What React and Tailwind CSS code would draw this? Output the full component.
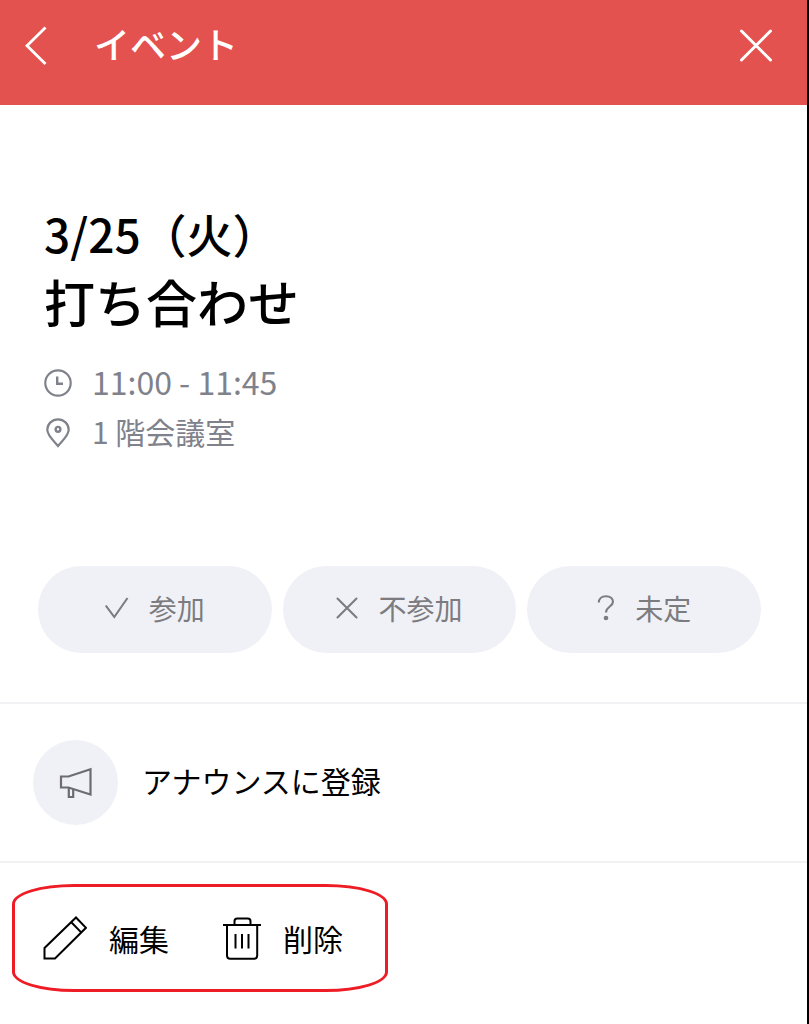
import { useState } from "react";

const responses = [
  { id: "yes", label: "参加", Icon: CheckIcon },
  { id: "no", label: "不参加", Icon: CrossIcon },
  { id: "maybe", label: "未定", Icon: QuestionIcon },
];

function BackIcon() {
  return (
    <svg width="24" height="40" viewBox="0 0 24 40" fill="none" stroke="currentColor" strokeWidth="2.8">
      <path d="M21.5 1.5 L3 19.8 L21.5 38" />
    </svg>
  );
}

function CloseIcon() {
  return (
    <svg width="34" height="34" viewBox="0 0 34 34" fill="none" stroke="currentColor" strokeWidth="3" strokeLinecap="round">
      <path d="M2.5 3 L31.5 32 M31.5 3 L2.5 32" />
    </svg>
  );
}

function ClockIcon() {
  return (
    <svg width="28" height="28" viewBox="0 0 28 28" fill="none" stroke="currentColor" strokeWidth="2.2">
      <circle cx="14" cy="14" r="12.7" />
      <path d="M13.2 7.5 V14.8 H19" strokeWidth="2.4" />
    </svg>
  );
}

function PinIcon() {
  return (
    <svg width="28" height="30" viewBox="0 0 28 30" fill="none" stroke="currentColor" strokeWidth="2.2">
      <path d="M14 28 C11 24 3.3 17.8 3.3 11.8 A10.7 10.5 0 0 1 24.7 11.8 C24.7 17.8 17 24 14 28 Z" />
      <circle cx="14" cy="11.3" r="2.4" strokeWidth="2.4" />
    </svg>
  );
}

function CheckIcon() {
  return (
    <svg width="24" height="24" viewBox="0 0 24 24" fill="none" stroke="currentColor" strokeWidth="2.1">
      <path d="M0.8 9.5 L9.3 21 L22.5 2" />
    </svg>
  );
}

function CrossIcon() {
  return (
    <svg width="22" height="22" viewBox="0 0 22 22" fill="none" stroke="currentColor" strokeWidth="2.1" strokeLinecap="round">
      <path d="M1.5 1.5 L20.5 20.5 M20.5 1.5 L1.5 20.5" />
    </svg>
  );
}

function QuestionIcon() {
  return (
    <svg width="18" height="26" viewBox="0 0 18 26" fill="none" stroke="currentColor" strokeWidth="2.1">
      <path d="M1.8 7.6 C1.8 3.8 4.6 1.3 9 1.3 C13.2 1.3 16 3.4 16 6.8 C16 11.6 9 11.6 9 17.6" />
      <circle cx="9" cy="23" r="2.3" fill="currentColor" stroke="none" />
    </svg>
  );
}

function MegaphoneIcon() {
  return (
    <svg width="34" height="32" viewBox="0 0 34 32" fill="none" stroke="currentColor" strokeWidth="2.2">
      <path d="M2 9.5 H9.5 L31.5 2.3 V27.5 L9.5 20.5 H2 Z" />
      <path d="M9.8 20.5 V30 H14.2 V22" />
    </svg>
  );
}

function PencilIcon() {
  return (
    <svg width="44" height="44" viewBox="0 0 44 44" fill="none" stroke="currentColor" strokeWidth="2">
      <path d="M1.5 42.5 V32 L33 1.5 L43 11.8 L12 42.5 Z M28.3 6.3 L38.2 16.4" />
    </svg>
  );
}

function TrashIcon() {
  return (
    <svg width="38" height="43" viewBox="0 0 38 43" fill="none" stroke="currentColor" strokeWidth="2">
      <path d="M0 8 H38" />
      <path d="M4 8 V38.5 Q4 41.7 7.2 41.7 H31 Q34.2 41.7 34.2 38.5 V8" />
      <path d="M11.5 8 V4.2 Q11.5 1.5 14.2 1.5 H24.8 Q27.5 1.5 27.5 4.2 V8" />
      <path d="M12.5 17 V31.5 M19 17 V31.5 M25.5 17 V31.5" />
    </svg>
  );
}

export default function App() {
  const [answer, setAnswer] = useState(null);

  return (
    <div className="flex min-h-screen flex-col border-r-2 border-black bg-white font-['Noto_Sans_CJK_JP',sans-serif] text-black">
      <header className="flex h-[105px] items-start justify-between bg-[#e3524f] pt-6 pr-[34px] pl-6 text-white">
        <div className="flex items-center gap-[46px]">
          <button type="button" aria-label="戻る" className="mt-0.5">
            <BackIcon />
          </button>
          <h1 className="pb-1 text-[36px] leading-9 font-medium">イベント</h1>
        </div>
        <button type="button" aria-label="閉じる" className="mt-1">
          <CloseIcon />
        </button>
      </header>

      <main>
        <section className="px-11 pt-[95px]">
          <h2 className="font-medium">
            <span className="block text-[46px] leading-[66px]">3/25（火）</span>
            <span className="block text-[51px] leading-[70px]">打ち合わせ</span>
          </h2>
          <div className="mt-[22px] text-[#7f828b]">
            <p className="flex h-[50px] items-center gap-5">
              <ClockIcon />
              <span className="pb-1 text-[32px] leading-10">11:00 - 11:45</span>
            </p>
            <p className="flex h-[50px] items-center gap-5">
              <PinIcon />
              <span className="pb-1 text-[30px] leading-10">1 階会議室</span>
            </p>
          </div>
        </section>

        <section className="mt-[108px] grid grid-cols-3 gap-[11px] pr-[46px] pl-[38px]">
          {responses.map(({ id, label, Icon }) => (
            <button
              key={id}
              type="button"
              aria-pressed={answer === id}
              onClick={() => setAnswer(id)}
              className="flex h-[87px] items-center justify-center gap-5 rounded-full bg-[#f0f1f6] pb-1 text-[28px] text-[#7c7c80]"
            >
              <Icon />
              <span>{label}</span>
            </button>
          ))}
        </section>

        <section className="mt-[49px] border-y-2 border-[#f1f1f3] px-[33px] py-9">
          <button type="button" className="flex items-center gap-6 text-[30px]">
            <span className="flex size-[85px] items-center justify-center rounded-full bg-[#f0f1f6] text-[#6d6c74]">
              <MegaphoneIcon />
            </span>
            <span className="pb-1">アナウンスに登録</span>
          </button>
        </section>

        <section className="px-3 pt-[21px] pb-8">
          <div className="flex h-[108px] w-fit items-center gap-[54px] rounded-[62px/20px] border-3 border-[#ee1c25] pr-[42px] pl-7 text-[30px]">
            <button type="button" className="flex items-center gap-[22px]">
              <PencilIcon />
              <span>編集</span>
            </button>
            <button type="button" className="flex items-center gap-[22px]">
              <TrashIcon />
              <span>削除</span>
            </button>
          </div>
        </section>
      </main>
    </div>
  );
}
